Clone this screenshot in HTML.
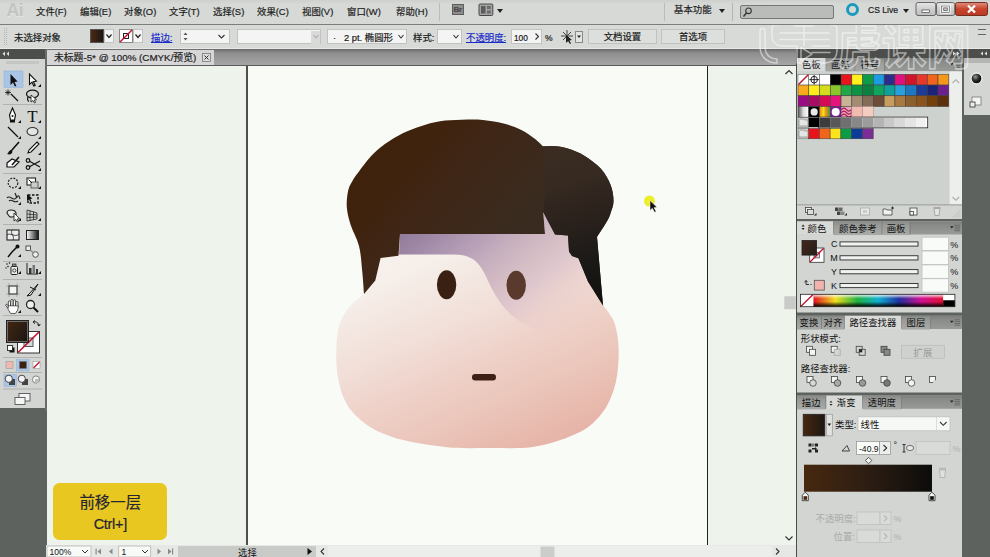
<!DOCTYPE html>
<html lang="zh">
<head>
<meta charset="utf-8">
<title>Illustrator</title>
<style>
*{box-sizing:border-box;margin:0;padding:0}
html,body{width:990px;height:557px;overflow:hidden;background:#5e625e}
body{position:relative;-webkit-text-stroke:0.2px currentColor;font-family:"Liberation Sans","Noto Sans CJK SC",sans-serif;font-size:10.5px;color:#1a1a1a;line-height:1}
.abs{position:absolute}
#menubar{left:0;top:0;width:990px;height:25px;background:linear-gradient(#cdd0cd,#d6d9d6 18%,#d6d9d6);border-bottom:1px solid #7c7e7c;z-index:2}
#menubar .mi{position:absolute;top:6.800px;font-size:9.4px;color:#222;white-space:nowrap;letter-spacing:0px}
#ctrlbar{left:0;top:24px;width:990px;height:25px;background:#d7dad7;border-bottom:1.5px solid #e8e8e8}
#ctrlbar .t{position:absolute;top:9px;font-size:9.4px;white-space:nowrap}
.box{position:absolute;background:#f4f4f4;border:1px solid #c2c2c2}
.blue{color:#1a2cc8;text-decoration:underline}
.btn{position:absolute;background:#dcdfdc;border:1px solid #bfc2bf;text-align:center;font-size:9.4px;line-height:14.5px}
#tabrow{left:46px;top:49px;width:751px;height:16px;background:linear-gradient(#6a6a6a,#8e8e8e 25%,#a6a6a6)}
#doctab{left:47px;top:50px;width:167px;height:15.5px;background:#d6d6d6;font-size:9.8px;line-height:16px;padding-left:7px;white-space:nowrap;color:#222}
#toolbar{left:0;top:49px;width:45px;height:359px;background:#d2d5d2}
#toolhead{left:0;top:49px;width:45px;height:9.5px;background:#4c4e4c}
#canvas{left:47px;top:65px;width:735px;height:480px;background:#eef3ec;overflow:hidden;border-top:1px solid #5a5a5a}
#artboard{left:199px;top:-2px;width:462px;height:484px;background:#f8fbf6;border-left:2px solid #4e4e4e;border-right:1px solid #222}
#vscroll{left:782px;top:65px;width:14px;height:480px;background:#eef0ee}
#status{left:46px;top:545px;width:750px;height:12px;background:#e2e4e2}
#rpanel{left:797px;top:57px;width:165px;height:500px;background:#5e625e}
.panel{position:absolute;left:0;width:165px;background:#d3d5d3}
.ptabs{position:absolute;left:0;top:0;width:165px;height:13px;background:#a9aba9}
.ptab{position:absolute;top:0;height:13px;font-size:9.4px;line-height:13px;text-align:center;white-space:nowrap;color:#111;background:#b8bab8;border-right:1px solid #8a8c8a}
.ptab.act{background:#d3d5d3;border-right:none}
.lbl{position:absolute;font-size:9.4px;white-space:nowrap}
.dis{color:#a9aba9}
</style>
</head>
<body>
<!-- MENUBAR -->
<div id="menubar" class="abs">
  <div class="abs" style="left:6.500px;top:0px;font-size:17.500px;font-weight:bold;color:#c2c5c2;letter-spacing:-0.500px;line-height:21px;-webkit-text-stroke:0;text-shadow:0 1px 0 #e4e6e4">Ai</div>
  <div class="mi" style="left:36px">文件(F)</div>
  <div class="mi" style="left:80px">编辑(E)</div>
  <div class="mi" style="left:124px">对象(O)</div>
  <div class="mi" style="left:169px">文字(T)</div>
  <div class="mi" style="left:213px">选择(S)</div>
  <div class="mi" style="left:257px">效果(C)</div>
  <div class="mi" style="left:302px">视图(V)</div>
  <div class="mi" style="left:347px">窗口(W)</div>
  <div class="mi" style="left:396px">帮助(H)</div>
  <div class="abs" style="left:439px;top:3px;width:1px;height:18px;background:#bcbcbc"></div>
  <div class="abs" style="left:451.500px;top:3.800px;width:12.500px;height:11.400px;background:#8e8e8e;border:1px solid #5c5c5c;color:#484848;font-size:8px;font-weight:bold;line-height:9.500px;text-align:center;letter-spacing:-0.300px">Br</div>
  <svg class="abs" style="left:478px;top:3px" width="16" height="14"><rect x="1" y="1" width="13.800" height="11.500" rx="1" fill="#a4a4a4" stroke="#484848" stroke-width="1"/><rect x="3" y="3" width="4.500" height="7.500" fill="#5c5c5c"/><rect x="9" y="3" width="3.800" height="3" fill="#6c6c6c"/><rect x="9" y="7.500" width="3.800" height="3" fill="#6c6c6c"/></svg>
  <div class="abs" style="left:497px;top:8.500px;border:3px solid transparent;border-top:4px solid #222"></div>
  <div class="mi" style="left:674px;top:5px">基本功能</div>
  <div class="abs" style="left:718.500px;top:9px;border:3px solid transparent;border-top:4px solid #222"></div>
  <div class="abs" style="left:731.500px;top:3px;width:1px;height:18px;background:#b4b4b4"></div>
  <div class="abs" style="left:740px;top:4.500px;width:94px;height:14px;background:#babcba;border:1px solid #767676;border-radius:2px"></div>
  <div class="abs" style="left:664px;top:3px;width:1px;height:18px;background:#bcbcbc"></div>
  <svg class="abs" style="left:742px;top:6px" width="12" height="12"><circle cx="6.500" cy="4.800" r="2.800" fill="none" stroke="#333" stroke-width="1.100"/><path d="M4.500,7 L1.500,10.500" stroke="#333" stroke-width="1.400"/></svg>
  <div class="abs" style="left:845.500px;top:3.300px;width:13px;height:13px;border:3px solid #1b9bbb;border-radius:50%"></div>
  <div class="mi" style="left:868px;top:5.500px;font-size:8.600px;letter-spacing:0px">CS Live</div>
  <div class="abs" style="left:902.500px;top:8.500px;border:3px solid transparent;border-top:4px solid #222"></div>
  <svg class="abs" style="left:914px;top:0" width="76" height="18">
   <defs><linearGradient id="wb" x1="0" x2="0" y1="0" y2="1"><stop offset="0" stop-color="#e6e6e6"/><stop offset="0.5" stop-color="#cfcfcf"/><stop offset="1" stop-color="#bdbdbd"/></linearGradient>
   <linearGradient id="wc" x1="0" x2="0" y1="0" y2="1"><stop offset="0" stop-color="#e09080"/><stop offset="0.5" stop-color="#c8432c"/><stop offset="1" stop-color="#b83a24"/></linearGradient></defs>
   <rect x="2" y="2.500" width="19.700" height="13" rx="2" fill="url(#wb)" stroke="#5a5a5a" stroke-width="0.900"/>
   <rect x="22.500" y="2.500" width="18.200" height="13" rx="2" fill="url(#wb)" stroke="#5a5a5a" stroke-width="0.900"/>
   <rect x="41.500" y="2.500" width="32" height="13" rx="2" fill="url(#wc)" stroke="#6a2416" stroke-width="0.900"/>
   <rect x="8" y="10" width="7.500" height="2.500" fill="#fff" stroke="#444" stroke-width="0.700"/>
   <rect x="27.500" y="6" width="8" height="6.500" fill="none" stroke="#fff" stroke-width="2.200"/><rect x="27.500" y="6" width="8" height="6.500" fill="none" stroke="#444" stroke-width="0.600"/><rect x="29.800" y="8" width="3.400" height="2.500" fill="none" stroke="#444" stroke-width="0.600"/>
   <path d="M54,5.500 L61,12.500 M61,5.500 L54,12.500" stroke="#fff" stroke-width="2.300"/>
  </svg>
</div>
<!-- CONTROL BAR -->
<div id="ctrlbar" class="abs">
  <div class="abs" style="left:4px;top:4px;width:3px;height:17px;border-left:1px dotted #b4b4b4;border-right:1px dotted #b4b4b4"></div>
  <div class="t" style="left:14px">未选择对象</div>
  <div class="abs" style="left:90px;top:5px;width:14px;height:14px;background:linear-gradient(90deg,#4a2a14,#1c1611);border:1px solid #555"></div>
  <div class="box" style="left:104px;top:5px;width:10px;height:14px"></div>
  <svg class="abs" style="left:104px;top:5px" width="10" height="14"><path d="M2.500,5.500 L5,8.500 L7.500,5.500" fill="none" stroke="#222" stroke-width="1.200"/></svg>
  <div class="abs" style="left:119px;top:5px;width:14px;height:14px;background:#fff;border:1px solid #888"></div>
  <svg class="abs" style="left:119px;top:5px" width="14" height="14"><rect x="4.500" y="4.500" width="5" height="5" fill="#fff" stroke="#222" stroke-width="1"/><path d="M1,13 L13,1" stroke="#c0102c" stroke-width="1.500"/></svg>
  <div class="box" style="left:133px;top:5px;width:10px;height:14px"></div>
  <svg class="abs" style="left:133px;top:5px" width="10" height="14"><path d="M2.500,5.500 L5,8.500 L7.500,5.500" fill="none" stroke="#222" stroke-width="1.200"/></svg>
  <div class="t blue" style="left:151px">描边:</div>
  <div class="box" style="left:180px;top:5px;width:50px;height:15px"></div>
  <svg class="abs" style="left:180px;top:5px" width="50" height="15"><path d="M3.500,6 L5.500,3.500 L7.500,6 Z M3.500,9 L5.500,11.500 L7.500,9 Z" fill="#555"/><path d="M38.500,6 L41.500,9 L44.500,6" fill="none" stroke="#333" stroke-width="1.100"/></svg>
  <div class="box" style="left:237px;top:5px;width:84px;height:15px"></div>
  <div class="abs" style="left:311px;top:7px;width:9px;height:13px;background:#dadada"></div>
  <svg class="abs" style="left:311px;top:5px" width="10" height="15"><path d="M2.500,6 L5,9 L7.500,6" fill="none" stroke="#aaa" stroke-width="1.100"/></svg>
  <div class="box" style="left:327px;top:5px;width:80px;height:15px"></div>
  <div class="t" style="left:333px;top:8.500px">·&nbsp;&nbsp;&nbsp;2 pt. 椭圆形</div>
  <svg class="abs" style="left:396px;top:5px" width="10" height="15"><path d="M2.500,6 L5,9 L7.500,6" fill="none" stroke="#333" stroke-width="1.100"/></svg>
  <div class="t" style="left:413px">样式:</div>
  <div class="box" style="left:437px;top:5px;width:25px;height:15px"></div>
  <svg class="abs" style="left:451px;top:5px" width="10" height="15"><path d="M2.500,6 L5,9 L7.500,6" fill="none" stroke="#333" stroke-width="1.100"/></svg>
  <div class="t blue" style="left:466px">不透明度:</div>
  <div class="box" style="left:511px;top:5px;width:31px;height:15px"></div>
  <div class="t" style="left:514px;top:9.500px;font-size:8.300px">100</div>
  <svg class="abs" style="left:532px;top:5px" width="10" height="15"><path d="M3.500,4.500 L6.500,7.500 L3.500,10.500" fill="none" stroke="#333" stroke-width="1.100"/></svg>
  <div class="t" style="left:545px;top:9.500px;font-size:8.500px">%</div>
  <svg class="abs" style="left:560px;top:4px" width="24" height="18"><g stroke="#444" stroke-width="1" fill="none"><path d="M3,4 L11,12 M7,2 L7,14 M1,8 L13,8 M11,4 L3,12"/></g><path d="M6,7 L6,15 L8,13 L10,16 L11,15.500 L9.500,12.500 L12,12 Z" fill="#222"/><rect x="15.500" y="3.500" width="7" height="11" fill="#e4e4e4" stroke="#888"/><path d="M17,7.500 L19,10 L21,7.500 Z" fill="#222"/></svg>
  <div class="btn" style="left:588px;top:5px;width:69px;height:15px">文档设置</div>
  <div class="btn" style="left:661px;top:5px;width:64px;height:15px">首选项</div>
  <div class="abs" style="left:978px;top:5px;width:8px;height:6px;border-top:1px solid #666;border-bottom:1px solid #666"></div>
</div>
<!-- TAB ROW -->
<div id="tabrow" class="abs"></div>
<div id="doctab" class="abs">未标题-5* @ 100% (CMYK/预览)</div>
<svg class="abs" style="left:201px;top:52px" width="11" height="11"><rect x="1.500" y="1.500" width="8" height="8" fill="#dcdcdc" stroke="#777" stroke-width="0.800"/><path d="M3.500,3.500 L7.500,7.500 M7.500,3.500 L3.500,7.500" stroke="#333" stroke-width="1"/></svg>
<!-- TOOLBAR -->
<div id="toolbar" class="abs"></div>
<div id="toolhead" class="abs"></div>
<svg class="abs" style="left:0;top:49px" width="47" height="362" viewBox="0 49 47 362">
<rect x="45" y="49" width="2" height="362" fill="#6a6c6a"/>
<path d="M5,51.500 L2.500,53.700 L5,56 Z M9,51.500 L6.500,53.700 L9,56 Z" fill="#ddd"/>
<rect x="6" y="61" width="33" height="3" fill="#c4c6c4"/>
<rect x="4" y="71" width="19" height="16.500" fill="#a9c4e4" stroke="#8fb0d8" stroke-width="0.500"/>
<g fill="#111">
<!-- selection arrow -->
<path d="M10.500,74 L10.500,85 L13,82.600 L14.900,86.600 L16.400,85.900 L14.500,82 L17.600,81.600 Z"/>
<!-- direct select -->
<path d="M29.500,74 L29.500,84.500 L32,82.200 L33.800,86 L35.200,85.400 L33.400,81.600 L36.400,81.200 Z" fill="#fff" stroke="#111" stroke-width="1.100"/>
<path d="M41,84 L41,87 L38,87 Z"/>
</g>
<!-- magic wand -->
<g stroke="#111" stroke-width="1.300" fill="none"><path d="M11,94 L18,101"/><path d="M8,89.500 L8,95.500 M5,92.500 L11,92.500 M6,90.500 L10,94.500 M10,90.500 L6,94.500" stroke-width="0.800"/></g>
<!-- lasso -->
<g stroke="#111" stroke-width="1.200" fill="none"><ellipse cx="32.500" cy="94" rx="6" ry="3.800"/><path d="M28,97 C27,99 28,101 29,101.500"/></g>
<path d="M31,95 L31,102 L33,100.500 L34.500,103 L35.600,102.400 L34.300,100 L36.500,99.600 Z" fill="#fff" stroke="#111" stroke-width="0.800"/>
<rect x="3" y="104" width="39" height="1" fill="#b0b2b0"/>
<!-- pen -->
<path d="M12.500,108 L9.500,115 L10.500,120 L14.500,120 L15.500,115 Z" fill="#fff" stroke="#111" stroke-width="1.200"/><rect x="10" y="120" width="5" height="2.500" fill="#111"/><circle cx="12.500" cy="116" r="1" fill="#111"/>
<path d="M21,120 L21,123 L18,123 Z" fill="#111"/>
<!-- T -->
<text x="32.500" y="122" font-family="Liberation Serif,serif" font-size="17" text-anchor="middle" fill="#111">T</text>
<path d="M41,120 L41,123 L38,123 Z" fill="#111"/>
<!-- line -->
<path d="M8,127 L18,137" stroke="#111" stroke-width="1.300"/><path d="M21,136 L21,139 L18,139 Z" fill="#111"/>
<!-- ellipse -->
<ellipse cx="32.500" cy="131.500" rx="5.500" ry="4" fill="#e4e4e4" stroke="#333" stroke-width="1.100"/><path d="M41,136 L41,139 L38,139 Z" fill="#111"/>
<!-- brush -->
<path d="M19,142 L12,150 L10,152" stroke="#111" stroke-width="1.600" fill="none"/><path d="M11,150 C8,151 9,153 7,154 C10,155 12,154 12.500,151.500 Z" fill="#111"/>
<!-- pencil -->
<path d="M37,142 L39,144 L31,152 L28,153 L29,150 Z" fill="#fff" stroke="#111" stroke-width="1.100"/><path d="M41,152 L41,155 L38,155 Z" fill="#111"/>
<!-- blob/eraser -->
<path d="M7,163 L12,159 L19,162 L14,167 L7,167 Z" fill="#fff" stroke="#111" stroke-width="1.200"/><path d="M19,157 L12,165" stroke="#111" stroke-width="1.500"/>
<!-- scissors -->
<g stroke="#111" stroke-width="1.200" fill="none"><path d="M29,161 L40,167 M29,167 L40,161"/><circle cx="28" cy="160.500" r="1.800"/><circle cx="28" cy="167.500" r="1.800"/></g><path d="M41,168 L41,171 L38,171 Z" fill="#111"/>
<rect x="3" y="173" width="39" height="1" fill="#b0b2b0"/>
<!-- rotate -->
<circle cx="13" cy="183" r="4.800" fill="none" stroke="#222" stroke-width="1.200" stroke-dasharray="2 1.200"/><path d="M21,186 L21,189 L18,189 Z" fill="#111"/>
<!-- scale -->
<rect x="27" y="178" width="8.500" height="7" fill="#fff" stroke="#222" stroke-width="1.100"/><rect x="31" y="182" width="7" height="6" fill="#ccc" stroke="#555" stroke-width="0.900"/><path d="M28.500,179.500 L32,183" stroke="#111"/><path d="M41,186 L41,189 L38,189 Z" fill="#111"/>
<!-- warp -->
<path d="M7,198 C10,194 13,202 16,198 S19,196 20,199 M9,201 C12,198 14,204 18,201" stroke="#222" stroke-width="1.200" fill="none"/><path d="M15,193 L17,198" stroke="#222" stroke-width="1.200"/><path d="M21,202 L21,205 L18,205 Z" fill="#111"/>
<!-- free transform -->
<rect x="28" y="195" width="10" height="8" fill="none" stroke="#111" stroke-width="1.400" stroke-dasharray="2.500 1.500"/><path d="M27,194 L27,201 L29,199.500 L30.500,202 L31.600,201.400 L30.300,199 L32.500,198.600 Z" fill="#111"/>
<!-- shape builder -->
<path d="M7,213 C7,209 15,209 16,213 C17,217 10,218 9,216 Z" fill="#e8e8e8" stroke="#222" stroke-width="1.100"/><path d="M14,213 L14,221 L16,219.500 L17.500,222 L18.600,221.400 L17.300,219 L19.500,218.600 Z" fill="#fff" stroke="#111" stroke-width="0.800"/><path d="M21,218 L21,221 L18,221 Z" fill="#111"/>
<!-- perspective grid -->
<path d="M27,210 L27,221 L37,219 L37,213 Z M30,210.600 L30,220.400 M33.500,211.500 L33.500,219.700 M27,214 L37,215 M27,217.500 L37,217" fill="none" stroke="#333" stroke-width="0.900"/><path d="M41,218 L41,221 L38,221 Z" fill="#111"/>
<rect x="3" y="224" width="39" height="1" fill="#b0b2b0"/>
<!-- mesh -->
<rect x="7" y="230" width="12" height="10" fill="#eee" stroke="#222" stroke-width="1.100"/><path d="M7,235 C10,232 15,238 19,234 M12,230 C10,234 15,236 13,240" fill="none" stroke="#222" stroke-width="0.800"/>
<!-- gradient -->
<defs><linearGradient id="tg" x1="0" x2="1" y1="0" y2="0"><stop offset="0" stop-color="#fff"/><stop offset="1" stop-color="#111"/></linearGradient></defs>
<rect x="26.500" y="230.500" width="12" height="9" fill="url(#tg)" stroke="#222" stroke-width="1"/>
<!-- eyedropper -->
<path d="M18,246 L12,252 L8,257" stroke="#111" stroke-width="1.500" fill="none"/><circle cx="17.500" cy="246.500" r="2" fill="#111"/><path d="M21,254 L21,257 L18,257 Z" fill="#111"/>
<!-- blend -->
<rect x="26" y="246" width="4.500" height="4.500" fill="#eee" stroke="#444" stroke-width="0.900"/><circle cx="35.500" cy="254.500" r="2.800" fill="#eee" stroke="#444" stroke-width="0.900"/><path d="M30,250 L34,253" stroke="#888" stroke-width="1.500"/>
<rect x="3" y="261" width="39" height="1" fill="#b0b2b0"/>
<!-- symbol sprayer -->
<rect x="11" y="266.500" width="6.500" height="8" rx="1" fill="#eee" stroke="#222" stroke-width="1"/><rect x="12.500" y="264" width="3.500" height="2.500" fill="#888" stroke="#222" stroke-width="0.700"/><circle cx="14.300" cy="270.500" r="1.600" fill="none" stroke="#222" stroke-width="0.800"/>
<g fill="#222"><circle cx="7" cy="264" r="0.800"/><circle cx="9.500" cy="263" r="0.800"/><circle cx="8" cy="266.500" r="0.800"/><circle cx="6" cy="268" r="0.700"/></g>
<path d="M21,271 L21,274 L18,274 Z" fill="#111"/>
<!-- graph -->
<path d="M27,263 L27,274 L38,274" fill="none" stroke="#222" stroke-width="1"/><rect x="29" y="268" width="2.500" height="6" fill="#333"/><rect x="32.500" y="265" width="2.500" height="9" fill="#777"/><rect x="36" y="269" width="2" height="5" fill="#333"/><path d="M41,271 L41,274 L38,274 Z" fill="#111"/>
<rect x="3" y="279" width="39" height="1" fill="#b0b2b0"/>
<!-- artboard -->
<rect x="9" y="286" width="8" height="8" fill="#f4f4f4" stroke="#333" stroke-width="1"/><path d="M9,283.500 L9,296.500 M17,283.500 L17,296.500 M6.500,286 L19.500,286 M6.500,294 L19.500,294" stroke="#555" stroke-width="0.600" stroke-dasharray="1 1"/>
<!-- slice -->
<path d="M38,284 L30,293 L27,296 L31,295 Z" fill="#eee" stroke="#111" stroke-width="1"/><path d="M30,287 L36,290" stroke="#111" stroke-width="1"/><path d="M41,293 L41,296 L38,296 Z" fill="#111"/>
<!-- hand -->
<g fill="#fff" stroke="#222" stroke-width="0.800" stroke-linejoin="round">
<path d="M8.500,309 L5.800,305.500 C5.300,304.500 6.500,303.800 7.300,304.600 L9,306.500 Z"/>
<rect x="8.300" y="301" width="2.300" height="7" rx="1.100"/><rect x="10.800" y="299.500" width="2.300" height="8" rx="1.100"/><rect x="13.300" y="299.800" width="2.300" height="8" rx="1.100"/><rect x="15.800" y="301.500" width="2.200" height="7" rx="1.100"/>
<path d="M8.300,306 L18,306 L17.600,310 L15.500,313.300 L10.500,313.300 L8.300,309.500 Z"/>
</g>
<path d="M8.700,306.600 L17.600,306.600 L17.300,309.500 L15.200,312.800 L10.800,312.800 L8.700,309.300 Z" fill="#fff"/>
<path d="M21,310 L21,313 L18,313 Z" fill="#111"/>
<!-- zoom -->
<circle cx="30.500" cy="304.500" r="4" fill="#f0f0f0" stroke="#222" stroke-width="1.300"/><path d="M33.500,307.500 L38,312" stroke="#111" stroke-width="2"/>
<rect x="3" y="315" width="39" height="1" fill="#b0b2b0"/>
<!-- fill/stroke -->
<rect x="17.500" y="331.500" width="22" height="21.500" fill="#fff" stroke="#333" stroke-width="1"/>
<rect x="24" y="338" width="9" height="8.500" fill="#d8d8d8" stroke="#555" stroke-width="1"/>
<path d="M18,352.500 L39,332" stroke="#c0102c" stroke-width="1.600"/>
<defs><linearGradient id="tf" x1="0" x2="1" y1="0" y2="0.600"><stop offset="0" stop-color="#452712"/><stop offset="1" stop-color="#1e1813"/></linearGradient></defs>
<rect x="6.500" y="320.500" width="22" height="22" fill="url(#tf)" stroke="#222" stroke-width="1"/>
<rect x="7.500" y="321.500" width="20" height="20" fill="none" stroke="#8a8a8a" stroke-width="0.700"/>
<path d="M33,322 C36,321 39,323 39,326 M39,326 L37.300,324.500 M39,326 L40.300,324" stroke="#222" stroke-width="1" fill="none"/><path d="M33,322 L35,320.500 M33,322 L35,323.700" stroke="#222" stroke-width="1" fill="none"/>
<rect x="9.500" y="347.500" width="5" height="5" fill="#111"/><rect x="7.500" y="345.500" width="5" height="5" fill="#fff" stroke="#111" stroke-width="0.800"/>
<rect x="3" y="357" width="39" height="1" fill="#b0b2b0"/>
<!-- color/gradient/none -->
<rect x="6" y="361.500" width="7" height="7" fill="#efb8b0" stroke="#999" stroke-width="0.600"/>
<rect x="16.500" y="359.500" width="12.500" height="11.500" fill="#a9c4e4" stroke="#8fb0d8" stroke-width="0.500"/>
<rect x="19.500" y="361.500" width="7" height="7" fill="#3a2112" stroke="#777" stroke-width="0.600"/>
<rect x="33" y="361.500" width="7" height="7" fill="#fff" stroke="#999" stroke-width="0.600"/><path d="M33.500,368 L39.500,362" stroke="#c0102c" stroke-width="1.300"/>
<rect x="3" y="372" width="39" height="1" fill="#b0b2b0"/>
<!-- draw modes -->
<rect x="4" y="374.500" width="12.500" height="12" fill="#a9c4e4" stroke="#8fb0d8" stroke-width="0.500"/>
<rect x="9" y="379" width="6" height="6" fill="#444"/><circle cx="8.800" cy="378.800" r="3.600" fill="#f4f4f4" stroke="#333" stroke-width="0.900"/>
<rect x="22" y="379" width="6" height="6" fill="#444"/><circle cx="21.800" cy="378.800" r="3.600" fill="#f4f4f4" stroke="#333" stroke-width="0.900"/>
<circle cx="36" cy="379.500" r="3.600" fill="#f4f4f4" stroke="#777" stroke-width="0.900"/><rect x="35" y="379" width="4" height="4" fill="#bbb"/>
<rect x="3" y="388.500" width="39" height="1" fill="#b0b2b0"/>
<!-- screen mode -->
<rect x="19" y="393.500" width="11" height="7.500" fill="#f4f4f4" stroke="#555" stroke-width="0.900"/><rect x="15" y="397.500" width="10" height="7" fill="#f4f4f4" stroke="#555" stroke-width="0.900"/>
</svg>
<!-- CANVAS -->
<div id="canvas" class="abs">
  <div id="artboard" class="abs"></div>
</div>
<svg class="abs" style="left:0;top:0" width="990" height="557" viewBox="0 0 990 557">
<defs>
<linearGradient id="gHair" gradientUnits="userSpaceOnUse" x1="370" y1="130" x2="600" y2="330">
<stop offset="0" stop-color="#40220a"/><stop offset="0.17" stop-color="#3f230d"/><stop offset="0.25" stop-color="#402514"/><stop offset="0.45" stop-color="#3c291b"/><stop offset="0.55" stop-color="#3a2b1f"/><stop offset="0.7" stop-color="#372a20"/><stop offset="1" stop-color="#2a211c"/>
</linearGradient>
<linearGradient id="gHair2" gradientUnits="userSpaceOnUse" x1="560" y1="150" x2="610" y2="305">
<stop offset="0" stop-color="#3a2c21"/><stop offset="0.2" stop-color="#362a21"/><stop offset="0.45" stop-color="#2a211c"/><stop offset="0.72" stop-color="#1a1917"/><stop offset="1" stop-color="#0f0f0d"/>
</linearGradient>
<linearGradient id="gFace" gradientUnits="userSpaceOnUse" x1="415" y1="240" x2="515" y2="465">
<stop offset="0" stop-color="#f7f1ed"/><stop offset="0.1" stop-color="#f6efea"/><stop offset="0.39" stop-color="#f1ded7"/><stop offset="0.58" stop-color="#eed0c7"/><stop offset="0.74" stop-color="#ebc6bb"/><stop offset="0.91" stop-color="#e8b9ad"/><stop offset="1" stop-color="#e6b2a6"/>
</linearGradient>
<linearGradient id="gShadow" gradientUnits="userSpaceOnUse" x1="400" y1="228" x2="522.2" y2="373.5">
<stop offset="0" stop-color="#8f7998"/><stop offset="0.128" stop-color="#9d87a5"/><stop offset="0.314" stop-color="#b7a0b7"/><stop offset="0.45" stop-color="#c9b2bf"/><stop offset="0.585" stop-color="#d6bfc5"/><stop offset="0.68" stop-color="#dcc4cc" stop-opacity="0.9"/><stop offset="0.8" stop-color="#e4c6c8" stop-opacity="0.45"/><stop offset="0.92" stop-color="#e8c8c8" stop-opacity="0.1"/><stop offset="1" stop-color="#ecc8c4" stop-opacity="0"/>
</linearGradient>
</defs>
<!-- face -->
<path d="M364.0,294.0 C361.8,295.9 354.8,300.8 351.0,305.3 C347.1,309.7 343.2,315.4 340.9,320.5 C338.6,325.6 338.0,330.7 337.2,335.8 C336.5,340.9 336.4,346.0 336.3,351.1 C336.2,356.2 336.2,361.2 336.6,366.3 C337.0,371.4 337.6,376.5 338.7,381.6 C339.9,386.7 341.0,391.8 343.3,396.9 C345.6,402.0 347.9,407.0 352.5,412.1 C357.1,417.2 362.7,422.8 370.8,427.4 C378.9,432.0 388.6,436.3 401.3,439.6 C414.0,442.9 432.2,445.9 447.0,447.3 C461.8,448.7 476.0,448.0 490.0,448.0 C504.0,448.0 519.1,448.7 531.0,447.3 C542.9,445.9 552.2,442.9 561.6,439.6 C571.0,436.3 580.7,432.0 587.6,427.4 C594.4,422.8 598.9,417.2 602.8,412.1 C606.7,407.0 608.9,402.0 611.1,396.9 C613.3,391.8 614.8,386.7 616.0,381.6 C617.1,376.5 617.6,371.4 618.1,366.3 C618.5,361.2 618.8,356.2 618.7,351.1 C618.6,346.0 618.3,340.9 617.5,335.8 C616.6,330.7 615.8,325.6 613.5,320.5 C611.2,315.5 605.2,308.0 603.5,305.5 L578.4,258.2 L572,256 L569,251.5 L568,232 L540,205 L400,232.5 L398.5,255.7 L380.6,258 L375.3,280.5 Z" fill="url(#gFace)"/>
<!-- shadow -->
<clipPath id="faceClip"><path d="M364.0,294.0 C361.8,295.9 354.8,300.8 351.0,305.3 C347.1,309.7 343.2,315.4 340.9,320.5 C338.6,325.6 338.0,330.7 337.2,335.8 C336.5,340.9 336.4,346.0 336.3,351.1 C336.2,356.2 336.2,361.2 336.6,366.3 C337.0,371.4 337.6,376.5 338.7,381.6 C339.9,386.7 341.0,391.8 343.3,396.9 C345.6,402.0 347.9,407.0 352.5,412.1 C357.1,417.2 362.7,422.8 370.8,427.4 C378.9,432.0 388.6,436.3 401.3,439.6 C414.0,442.9 432.2,445.9 447.0,447.3 C461.8,448.7 476.0,448.0 490.0,448.0 C504.0,448.0 519.1,448.7 531.0,447.3 C542.9,445.9 552.2,442.9 561.6,439.6 C571.0,436.3 580.7,432.0 587.6,427.4 C594.4,422.8 598.9,417.2 602.8,412.1 C606.7,407.0 608.9,402.0 611.1,396.9 C613.3,391.8 614.8,386.7 616.0,381.6 C617.1,376.5 617.6,371.4 618.1,366.3 C618.5,361.2 618.8,356.2 618.7,351.1 C618.6,346.0 618.3,340.9 617.5,335.8 C616.6,330.7 615.8,325.6 613.5,320.5 C611.2,315.5 605.2,308.0 603.5,305.5 L578.4,258.2 L572,256 L569,251.5 L568,232 L540,205 L400,232.5 L398.5,255.7 L380.6,258 L375.3,280.5 Z"/></clipPath>
<path clip-path="url(#faceClip)" d="M400,233.5 L545,233.5 L543.2,211.9 L555,234.5 L568,235.6 L569,251.5 L572,256 L578.4,258.2 L603,305.5 C611,314 619,328 619,350 L575,338 C525,332 506,316 492,289 C482,268 478,255 455,254.5 L399,254.5 Z" fill="url(#gShadow)"/>
<!-- hair main -->
<path d="M364.0,294.0 C363.7,290.3 363.1,280.0 362.3,272.0 C361.5,264.0 361.0,253.9 359.0,246.0 C357.0,238.1 352.5,231.0 350.5,224.5 C348.5,218.0 347.2,212.8 346.8,207.0 C346.4,201.2 347.3,194.5 348.3,190.0 C349.3,185.5 351.4,182.9 353.0,180.0 C354.6,177.1 355.1,176.7 358.0,172.8 C360.9,168.9 366.0,161.5 370.5,156.7 C375.0,151.9 379.5,148.0 384.9,144.1 C390.3,140.2 396.8,136.3 402.8,133.3 C408.8,130.3 414.6,128.2 420.8,126.2 C427.0,124.2 433.2,122.4 440.0,121.3 C446.8,120.2 454.3,120.0 461.5,119.8 C468.7,119.6 475.8,119.3 483.0,120.0 C490.2,120.7 498.1,122.0 504.6,123.7 C511.1,125.4 516.9,127.7 521.9,130.2 C526.9,132.7 531.3,136.1 534.8,138.8 C538.3,141.5 541.6,145.1 543.0,146.3 C545.1,146.3 551.4,145.8 555.6,146.2 C559.9,146.6 563.6,147.2 568.5,148.8 C573.4,150.4 579.3,152.6 584.7,155.9 C590.1,159.2 596.6,164.0 600.9,168.8 C605.2,173.7 608.5,179.6 610.6,185.0 C612.7,190.4 613.5,196.3 613.5,201.0 C613.5,205.7 611.7,209.6 610.6,213.0 C609.5,216.4 609.1,217.5 606.8,221.5 C604.5,225.5 598.6,234.4 597.0,237.0 L603,305.5 L588,281.5 L578.4,258.2 L572,256 L569,251.5 L568,235.6 L555,234.5 L543.2,211.9 L545,234 L400,234 L398.5,255.7 L380.6,258 L375.3,280.5 Z" fill="url(#gHair)"/>
<!-- hair right bump -->
<path d="M543,146.3 C545.1,146.3 551.4,145.8 555.6,146.2 C559.9,146.6 563.6,147.2 568.5,148.8 C573.4,150.4 579.3,152.6 584.7,155.9 C590.1,159.2 596.6,164.0 600.9,168.8 C605.2,173.7 608.5,179.6 610.6,185.0 C612.7,190.4 613.5,196.3 613.5,201.0 C613.5,205.7 611.7,209.6 610.6,213.0 C609.5,216.4 609.1,217.5 606.8,221.5 C604.5,225.5 598.6,234.4 597.0,237.0 L603,305.5 L588,281.5 L578.4,258.2 L572,256 L569,251.5 L568,235.6 L555,234.5 L543.2,211.9 Q547.5,180 543,146.3 Z" fill="url(#gHair2)"/>
<!-- eyes -->
<ellipse cx="446.600" cy="284.700" rx="9.700" ry="14.500" fill="#3a2013"/>
<ellipse cx="516.200" cy="285.300" rx="9.700" ry="14.500" fill="#5a3a2c"/>
<!-- mouth -->
<rect x="472" y="374" width="24" height="6.500" rx="3.200" fill="#3e2114"/>
<!-- cursor -->
<circle cx="649.500" cy="201" r="5.500" fill="#ecee2a"/>
<path d="M650,200.500 L650,210.500 L652.300,208.300 L654.600,212.300 L656.200,211.500 L654,207.700 L657,207.300 Z" fill="#111" stroke="#fff" stroke-width="0.500"/>
</svg>
<svg class="abs" style="left:780px;top:49px" width="210" height="508" viewBox="780 49 210 508" font-family="Liberation Sans, Noto Sans CJK SC, sans-serif" font-size="9.4">
<defs>
<linearGradient id="spec" x1="0" x2="1" y1="0" y2="0"><stop offset="0" stop-color="#e01020"/><stop offset="0.17" stop-color="#f0e020"/><stop offset="0.34" stop-color="#20b040"/><stop offset="0.5" stop-color="#10b0d0"/><stop offset="0.66" stop-color="#2030a0"/><stop offset="0.83" stop-color="#d01090"/><stop offset="1" stop-color="#e01030"/></linearGradient>
<linearGradient id="specv" x1="0" x2="0" y1="0" y2="1"><stop offset="0" stop-color="#fff" stop-opacity="0.9"/><stop offset="0.35" stop-color="#fff" stop-opacity="0"/><stop offset="0.6" stop-color="#000" stop-opacity="0"/><stop offset="1" stop-color="#000" stop-opacity="1"/></linearGradient>
<linearGradient id="gbar" x1="0" x2="1" y1="0" y2="0"><stop offset="0" stop-color="#47280f"/><stop offset="0.5" stop-color="#2c1d13"/><stop offset="1" stop-color="#0c0c0a"/></linearGradient>
<linearGradient id="tabbg" x1="0" x2="0" y1="0" y2="1"><stop offset="0" stop-color="#7c7e7c"/><stop offset="0.3" stop-color="#8a8c8a"/><stop offset="1" stop-color="#989a98"/></linearGradient><linearGradient id="tabin" x1="0" x2="0" y1="0" y2="1"><stop offset="0" stop-color="#8c8e8c"/><stop offset="0.3" stop-color="#9a9c9a"/><stop offset="1" stop-color="#a8aaa8"/></linearGradient>
<radialGradient id="rg1"><stop offset="0.55" stop-color="#fff"/><stop offset="0.8" stop-color="#000"/></radialGradient>
<radialGradient id="rg2"><stop offset="0.5" stop-color="#fff"/><stop offset="0.95" stop-color="#7a1c98"/></radialGradient>
<linearGradient id="rain" x1="0" x2="1" y1="0" y2="0"><stop offset="0" stop-color="#f08018"/><stop offset="0.35" stop-color="#f8e018"/><stop offset="0.6" stop-color="#f09018"/><stop offset="1" stop-color="#30a040"/></linearGradient>
<radialGradient id="ball" cx="0.4" cy="0.35"><stop offset="0" stop-color="#999"/><stop offset="0.6" stop-color="#333"/><stop offset="1" stop-color="#111"/></radialGradient>
</defs>
<rect x="780" y="65" width="16" height="480" fill="#eef3ec"/><rect x="780" y="65" width="16" height="1" fill="#5a5a5a"/>
<rect x="784.300" y="296.200" width="11.500" height="13" fill="#c9cbc9"/>
<path d="M785.500,74 L789,70.500 L792.500,74" fill="none" stroke="#333" stroke-width="1.200"/>
<path d="M785.500,536.500 L789,540 L792.500,536.500" fill="none" stroke="#333" stroke-width="1.200"/>
<rect x="796" y="49" width="1.200" height="508" fill="#4a4c4a"/>
<rect x="797" y="49" width="193" height="9.500" fill="#4c4e4c"/>
<path d="M953,51.500 L955.500,53.500 L953,55.500 Z M957,51.500 L959.500,53.500 L957,55.500 Z" fill="#ddd"/>
<path d="M983,51.500 L980.500,53.500 L983,55.500 Z M987,51.500 L984.500,53.500 L987,55.500 Z" fill="#ddd"/>
<rect x="964" y="58" width="26" height="57" fill="#d3d5d3"/>
<rect x="964" y="58" width="26" height="5" fill="#b4b6b4"/>
<circle cx="976.500" cy="78.500" r="5.500" fill="url(#ball)" stroke="#eee" stroke-width="1.300"/>
<rect x="972" y="97" width="9" height="8" fill="#f4f4f4" stroke="#777" stroke-width="0.800"/><rect x="970" y="102" width="5" height="5" fill="#eee" stroke="#333" stroke-width="0.800"/>
<rect x="797" y="58" width="165" height="161" fill="#d2d5d2"/>
<rect x="797" y="58" width="165" height="13.2" fill="url(#tabbg)"/>
<rect x="797" y="58" width="28.5" height="13.5" fill="#d8dad8"/>
<text x="811.25" y="68.3" text-anchor="middle" fill="#111">色板</text>
<rect x="826.3" y="58.6" width="28.3" height="13.2" fill="url(#tabin)"/>
<rect x="854.6" y="58" width="0.8" height="13.2" fill="#7c7e7c"/>
<text x="840.45" y="68.3" text-anchor="middle" fill="#111">画笔</text>
<rect x="855.4" y="58.6" width="28.6" height="13.2" fill="url(#tabin)"/>
<rect x="884" y="58" width="0.8" height="13.2" fill="#7c7e7c"/>
<text x="869.7" y="68.3" text-anchor="middle" fill="#111">符号</text>
<path d="M950,63 l3.600,0 l-1.800,2.200 Z" fill="#222"/>
<g fill="#6a6c6a"><rect x="954.500" y="61.5" width="5.500" height="1"/><rect x="954.500" y="63.3" width="5.500" height="1"/><rect x="954.500" y="65.1" width="5.500" height="1"/><rect x="954.500" y="66.9" width="5.500" height="1"/></g>
<rect x="797" y="71.500" width="152.600" height="133" fill="#ced2ce"/>
<rect x="798" y="74.3" width="10.77" height="10.75" fill="#fff" stroke="#555" stroke-width="0.500"/>
<path d="M798.5,84.55 L808.27,74.8" stroke="#c0102c" stroke-width="1.400"/>
<rect x="808.77" y="74.3" width="10.77" height="10.75" fill="#fff" stroke="#555" stroke-width="0.500"/>
<circle cx="814.15" cy="79.67" r="3.300" fill="none" stroke="#111" stroke-width="0.900"/><path d="M809.27,79.67 h9.77 M814.15,74.8 v9.75" stroke="#111" stroke-width="0.900"/>
<rect x="819.54" y="74.3" width="10.77" height="10.75" fill="#ffffff" stroke="#3c3c3c" stroke-width="0.500"/>
<rect x="830.31" y="74.3" width="10.77" height="10.75" fill="#000000" stroke="#3c3c3c" stroke-width="0.500"/>
<rect x="841.08" y="74.3" width="10.77" height="10.75" fill="#e8141c" stroke="#3c3c3c" stroke-width="0.500"/>
<rect x="851.85" y="74.3" width="10.77" height="10.75" fill="#fff01e" stroke="#3c3c3c" stroke-width="0.500"/>
<rect x="862.62" y="74.3" width="10.77" height="10.75" fill="#0c9c48" stroke="#3c3c3c" stroke-width="0.500"/>
<rect x="873.39" y="74.3" width="10.77" height="10.75" fill="#1c9ce0" stroke="#3c3c3c" stroke-width="0.500"/>
<rect x="884.16" y="74.3" width="10.77" height="10.75" fill="#2c2c8c" stroke="#3c3c3c" stroke-width="0.500"/>
<rect x="894.93" y="74.3" width="10.77" height="10.75" fill="#e0107c" stroke="#3c3c3c" stroke-width="0.500"/>
<rect x="905.7" y="74.3" width="10.77" height="10.75" fill="#d0142c" stroke="#3c3c3c" stroke-width="0.500"/>
<rect x="916.47" y="74.3" width="10.77" height="10.75" fill="#e8382c" stroke="#3c3c3c" stroke-width="0.500"/>
<rect x="927.24" y="74.3" width="10.77" height="10.75" fill="#f0641c" stroke="#3c3c3c" stroke-width="0.500"/>
<rect x="938.01" y="74.3" width="10.77" height="10.75" fill="#f4981c" stroke="#3c3c3c" stroke-width="0.500"/>
<rect x="798" y="85.05" width="10.77" height="10.75" fill="#f8ac1c" stroke="#3c3c3c" stroke-width="0.500"/>
<rect x="808.77" y="85.05" width="10.77" height="10.75" fill="#fcec1c" stroke="#3c3c3c" stroke-width="0.500"/>
<rect x="819.54" y="85.05" width="10.77" height="10.75" fill="#d4dc1c" stroke="#3c3c3c" stroke-width="0.500"/>
<rect x="830.31" y="85.05" width="10.77" height="10.75" fill="#8cc42c" stroke="#3c3c3c" stroke-width="0.500"/>
<rect x="841.08" y="85.05" width="10.77" height="10.75" fill="#20a848" stroke="#3c3c3c" stroke-width="0.500"/>
<rect x="851.85" y="85.05" width="10.77" height="10.75" fill="#0c9444" stroke="#3c3c3c" stroke-width="0.500"/>
<rect x="862.62" y="85.05" width="10.77" height="10.75" fill="#0c8040" stroke="#3c3c3c" stroke-width="0.500"/>
<rect x="873.39" y="85.05" width="10.77" height="10.75" fill="#10a460" stroke="#3c3c3c" stroke-width="0.500"/>
<rect x="884.16" y="85.05" width="10.77" height="10.75" fill="#10a09c" stroke="#3c3c3c" stroke-width="0.500"/>
<rect x="894.93" y="85.05" width="10.77" height="10.75" fill="#28a0dc" stroke="#3c3c3c" stroke-width="0.500"/>
<rect x="905.7" y="85.05" width="10.77" height="10.75" fill="#1c78c0" stroke="#3c3c3c" stroke-width="0.500"/>
<rect x="916.47" y="85.05" width="10.77" height="10.75" fill="#1c3c98" stroke="#3c3c3c" stroke-width="0.500"/>
<rect x="927.24" y="85.05" width="10.77" height="10.75" fill="#1c2478" stroke="#3c3c3c" stroke-width="0.500"/>
<rect x="938.01" y="85.05" width="10.77" height="10.75" fill="#6c2090" stroke="#3c3c3c" stroke-width="0.500"/>
<rect x="798" y="95.8" width="10.77" height="10.75" fill="#980c84" stroke="#3c3c3c" stroke-width="0.500"/>
<rect x="808.77" y="95.8" width="10.77" height="10.75" fill="#a80c64" stroke="#3c3c3c" stroke-width="0.500"/>
<rect x="819.54" y="95.8" width="10.77" height="10.75" fill="#d40c58" stroke="#3c3c3c" stroke-width="0.500"/>
<rect x="830.31" y="95.8" width="10.77" height="10.75" fill="#e4147c" stroke="#3c3c3c" stroke-width="0.500"/>
<rect x="841.08" y="95.8" width="10.77" height="10.75" fill="#c8b494" stroke="#3c3c3c" stroke-width="0.500"/>
<rect x="851.85" y="95.8" width="10.77" height="10.75" fill="#a48c74" stroke="#3c3c3c" stroke-width="0.500"/>
<rect x="862.62" y="95.8" width="10.77" height="10.75" fill="#846c58" stroke="#3c3c3c" stroke-width="0.500"/>
<rect x="873.39" y="95.8" width="10.77" height="10.75" fill="#6c4c38" stroke="#3c3c3c" stroke-width="0.500"/>
<rect x="884.16" y="95.8" width="10.77" height="10.75" fill="#c89c5c" stroke="#3c3c3c" stroke-width="0.500"/>
<rect x="894.93" y="95.8" width="10.77" height="10.75" fill="#a87840" stroke="#3c3c3c" stroke-width="0.500"/>
<rect x="905.7" y="95.8" width="10.77" height="10.75" fill="#8c602c" stroke="#3c3c3c" stroke-width="0.500"/>
<rect x="916.47" y="95.8" width="10.77" height="10.75" fill="#8c541c" stroke="#3c3c3c" stroke-width="0.500"/>
<rect x="927.24" y="95.8" width="10.77" height="10.75" fill="#74400c" stroke="#3c3c3c" stroke-width="0.500"/>
<rect x="938.01" y="95.8" width="10.77" height="10.75" fill="#5c300c" stroke="#3c3c3c" stroke-width="0.500"/>
<rect x="798" y="106.55" width="10.77" height="10.75" fill="url(#tg2)" stroke="#3c3c3c" stroke-width="0.500"/><defs><linearGradient id="tg2" x1="0" x2="1" y1="0" y2="0"><stop offset="0" stop-color="#555"/><stop offset="0.5" stop-color="#ddd"/><stop offset="1" stop-color="#fff"/></linearGradient></defs>
<rect x="808.77" y="106.55" width="10.77" height="10.75" fill="#000" stroke="#3c3c3c" stroke-width="0.500"/><circle cx="814.15" cy="111.92" r="3.600" fill="#e8e8e8"/>
<rect x="819.54" y="106.55" width="10.77" height="10.75" fill="url(#rain)" stroke="#3c3c3c" stroke-width="0.500"/>
<rect x="830.31" y="106.55" width="10.77" height="10.75" fill="#7a1c98" stroke="#3c3c3c" stroke-width="0.500"/><circle cx="835.69" cy="111.92" r="4" fill="#fff"/>
<rect x="841.08" y="106.55" width="10.77" height="10.75" fill="#e6a8b8" stroke="#3c3c3c" stroke-width="0.500"/><path d="M841.48,109.55 q2.500,-3 5,0 t5,0 M841.48,112.55 q2.500,-3 5,0 t5,0 M841.48,115.55 q2.500,-3 5,0 t5,0" fill="none" stroke="#b01050" stroke-width="1.200"/>
<rect x="851.85" y="106.55" width="10.77" height="10.75" fill="#f0bcb0" stroke="#a88" stroke-width="0.500"/>
<rect x="862.62" y="106.55" width="10.77" height="10.75" fill="#f4ccc0" stroke="#a88" stroke-width="0.500"/>
<rect x="818.700" y="117.100" width="109" height="10.700" fill="#fff" stroke="#222" stroke-width="0.800"/><rect x="798" y="117.100" width="10.300" height="10.700" fill="none" stroke="#666" stroke-width="0.500"/><rect x="798" y="128.300" width="10.300" height="10.500" fill="none" stroke="#666" stroke-width="0.500"/>
<rect x="808.6" y="117.9" width="10.77" height="9.200" fill="#000000"/>
<rect x="819.37" y="117.9" width="10.77" height="9.200" fill="#3c3c3c"/>
<rect x="830.14" y="117.9" width="10.77" height="9.200" fill="#585858"/>
<rect x="840.91" y="117.9" width="10.77" height="9.200" fill="#707070"/>
<rect x="851.68" y="117.9" width="10.77" height="9.200" fill="#888888"/>
<rect x="862.45" y="117.9" width="10.77" height="9.200" fill="#9c9c9c"/>
<rect x="873.22" y="117.9" width="10.77" height="9.200" fill="#b4b4b4"/>
<rect x="883.99" y="117.9" width="10.77" height="9.200" fill="#c8c8c8"/>
<rect x="894.76" y="117.9" width="10.77" height="9.200" fill="#d8d8d8"/>
<rect x="905.53" y="117.9" width="10.77" height="9.200" fill="#e4e4e4"/>
<rect x="916.3" y="117.9" width="9.27" height="9.200" fill="#f0f0f0"/>
<path d="M799,126 l0,-5.500 l1.500,-1.500 l3,0 l1,1 l3.500,0 l0,6 Z" fill="#e4e6e4" stroke="#888" stroke-width="0.700"/>
<rect x="808.6" y="128.6" width="10.77" height="10.200" fill="#e8141c" stroke="#3c3c3c" stroke-width="0.500"/>
<rect x="819.37" y="128.6" width="10.77" height="10.200" fill="#f0641c" stroke="#3c3c3c" stroke-width="0.500"/>
<rect x="830.14" y="128.6" width="10.77" height="10.200" fill="#fce41c" stroke="#3c3c3c" stroke-width="0.500"/>
<rect x="840.91" y="128.6" width="10.77" height="10.200" fill="#0c9c48" stroke="#3c3c3c" stroke-width="0.500"/>
<rect x="851.68" y="128.6" width="10.77" height="10.200" fill="#0c3c98" stroke="#3c3c3c" stroke-width="0.500"/>
<rect x="862.45" y="128.6" width="10.77" height="10.200" fill="#7c2c98" stroke="#3c3c3c" stroke-width="0.500"/>
<path d="M799,137 l0,-5.500 l1.500,-1.500 l3,0 l1,1 l3.500,0 l0,6 Z" fill="#e4e6e4" stroke="#888" stroke-width="0.700"/>
<rect x="949.600" y="71.500" width="12.400" height="133" fill="#ecefec"/>
<path d="M952.500,83 L955.800,79.700 L959.100,83" fill="none" stroke="#aaa" stroke-width="1.100"/>
<path d="M952.500,197 L955.800,200.300 L959.100,197" fill="none" stroke="#aaa" stroke-width="1.100"/>
<rect x="797" y="204.500" width="165" height="0.800" fill="#8a8c8a"/>
<rect x="805.5" y="207.5" width="6" height="5" fill="#eee" stroke="#444" stroke-width="0.800"/><rect x="807.5" y="209.5" width="6" height="5" fill="#ddd" stroke="#444" stroke-width="0.800"/><path d="M816.5,213 l0,2.500 l-2.500,0 Z" fill="#222"/>
<rect x="835" y="207.5" width="3.500" height="3.500" fill="#444"/><rect x="839" y="207.5" width="3.500" height="3.500" fill="#666"/><rect x="837" y="211.5" width="3.500" height="3.500" fill="#444"/><rect x="841" y="211.5" width="3.500" height="3.500" fill="#888"/><path d="M847,213 l0,2.500 l-2.500,0 Z" fill="#222"/>
<rect x="860.5" y="208" width="9" height="7" fill="#e8e8e8" stroke="#aaa" stroke-width="0.800"/><rect x="863" y="210" width="4" height="3" fill="#ccc"/>
<path d="M883,215 l0,-6 l3,0 l1,1 l5,0 l0,5 Z" fill="#f0f0f0" stroke="#444" stroke-width="0.800"/><path d="M891,208 l3,0 M892.5,206.5 l0,3" stroke="#222" stroke-width="0.900"/>
<rect x="910" y="208" width="7" height="7" fill="#f4f4f4" stroke="#444" stroke-width="0.800"/><rect x="910" y="211.5" width="3.500" height="3.500" fill="#f4f4f4" stroke="#444" stroke-width="0.800"/>
<path d="M934,208.5 l1,7 l4,0 l1,-7 Z" fill="#e4e4e4" stroke="#999" stroke-width="0.800"/><rect x="933.5" y="207" width="7" height="1.400" fill="#aaa"/>
<path d="M960.500,210 L953,217.500 M960.500,213 L956,217.500 M960.500,216 L959,217.500" stroke="#b4b6b4" stroke-width="0.800"/>
<rect x="797" y="221.3" width="165" height="91.2" fill="#d2d5d2"/>
<rect x="797" y="221.3" width="165" height="13.2" fill="url(#tabbg)"/>
<rect x="797" y="221.3" width="36" height="13.5" fill="#d8dad8"/>
<text x="817" y="231.6" text-anchor="middle" fill="#111">颜色</text>
<rect x="834" y="221.9" width="47.6" height="13.2" fill="url(#tabin)"/>
<rect x="881.6" y="221.3" width="0.8" height="13.2" fill="#7c7e7c"/>
<text x="857.8" y="231.6" text-anchor="middle" fill="#111">颜色参考</text>
<rect x="882.5" y="221.9" width="27.1" height="13.2" fill="url(#tabin)"/>
<rect x="909.6" y="221.3" width="0.8" height="13.2" fill="#7c7e7c"/>
<text x="896.05" y="231.6" text-anchor="middle" fill="#111">画板</text>
<path d="M950,226.3 l3.600,0 l-1.800,2.200 Z" fill="#222"/>
<g fill="#6a6c6a"><rect x="954.500" y="224.8" width="5.500" height="1"/><rect x="954.500" y="226.6" width="5.500" height="1"/><rect x="954.500" y="228.4" width="5.500" height="1"/><rect x="954.500" y="230.2" width="5.500" height="1"/></g>
<path d="M801.500,226.500 l1.600,-2 l1.600,2 Z M801.500,228 l1.600,2 l1.600,-2 Z" fill="#222"/>
<rect x="809.700" y="248" width="14.300" height="14.300" fill="#fff" stroke="#333" stroke-width="0.800"/><rect x="814" y="252.300" width="5.600" height="5.600" fill="#d8d8d8" stroke="#555" stroke-width="0.800"/><path d="M810,262 L823.700,248.300" stroke="#c0102c" stroke-width="1.300"/>
<rect x="802" y="240.500" width="14.600" height="14.600" fill="url(#gbarS)" stroke="#222" stroke-width="0.800"/>
<defs><linearGradient id="gbarS" x1="0" x2="1" y1="0" y2="0.700"><stop offset="0" stop-color="#45281a"/><stop offset="1" stop-color="#28201b"/></linearGradient></defs>
<text x="831" y="247.3" fill="#111" font-size="9">C</text>
<rect x="840" y="241.9" width="78" height="4.200" fill="#f0f2f0" stroke="#2a2a2a" stroke-width="0.900"/>
<rect x="922" y="237.2" width="26.500" height="13.400" fill="#f9fbf9" stroke="#bfc1bf" stroke-width="0.800"/>
<text x="950.300" y="247.5" fill="#111" font-size="9">%</text>
<text x="830.3" y="261.15" fill="#111" font-size="9">M</text>
<rect x="840" y="255.75" width="78" height="4.200" fill="#f0f2f0" stroke="#2a2a2a" stroke-width="0.900"/>
<rect x="922" y="251.05" width="26.500" height="13.400" fill="#f9fbf9" stroke="#bfc1bf" stroke-width="0.800"/>
<text x="950.300" y="261.35" fill="#111" font-size="9">%</text>
<text x="831" y="275" fill="#111" font-size="9">Y</text>
<rect x="840" y="269.6" width="78" height="4.200" fill="#f0f2f0" stroke="#2a2a2a" stroke-width="0.900"/>
<rect x="922" y="264.9" width="26.500" height="13.400" fill="#f9fbf9" stroke="#bfc1bf" stroke-width="0.800"/>
<text x="950.300" y="275.2" fill="#111" font-size="9">%</text>
<text x="831" y="288.85" fill="#111" font-size="9">K</text>
<rect x="840" y="283.45" width="78" height="4.200" fill="#f0f2f0" stroke="#2a2a2a" stroke-width="0.900"/>
<rect x="922" y="278.75" width="26.500" height="13.400" fill="#f9fbf9" stroke="#bfc1bf" stroke-width="0.800"/>
<text x="950.300" y="289.05" fill="#111" font-size="9">%</text>
<path d="M806,280.500 l0,4 l3,0 M806,280.500 l-1.500,1.800 M806,280.500 l1.500,1.800" stroke="#222" stroke-width="0.900" fill="none"/><rect x="810.500" y="284" width="1" height="1" fill="#222"/>
<rect x="814.300" y="280.300" width="10" height="9.800" fill="#f0b4ac" stroke="#555" stroke-width="0.800"/>
<rect x="813.300" y="294.300" width="130" height="12.400" fill="url(#spec)"/><rect x="813.300" y="294.300" width="130" height="12.400" fill="url(#specv)"/>
<rect x="943.200" y="294.300" width="11.700" height="6" fill="#fff"/><rect x="943.200" y="300.300" width="11.700" height="6.400" fill="#000"/>
<rect x="800.500" y="294.300" width="12.800" height="12.400" fill="#fff"/><path d="M801,306.300 L812.800,294.800" stroke="#c0102c" stroke-width="1.300"/>
<rect x="800.500" y="294.300" width="154.400" height="12.400" fill="none" stroke="#222" stroke-width="0.800"/>
<rect x="797" y="315.8" width="165" height="76.7" fill="#d2d5d2"/>
<rect x="797" y="315.8" width="165" height="13.2" fill="url(#tabbg)"/>
<rect x="797" y="316.4" width="24" height="13.2" fill="url(#tabin)"/>
<rect x="821" y="315.8" width="0.8" height="13.2" fill="#7c7e7c"/>
<text x="809" y="326.1" text-anchor="middle" fill="#111">变换</text>
<rect x="822" y="316.4" width="22" height="13.2" fill="url(#tabin)"/>
<rect x="844" y="315.8" width="0.8" height="13.2" fill="#7c7e7c"/>
<text x="833" y="326.1" text-anchor="middle" fill="#111">对齐</text>
<rect x="844.8" y="315.8" width="56.2" height="13.5" fill="#d8dad8"/>
<text x="872.9" y="326.1" text-anchor="middle" fill="#111">路径查找器</text>
<rect x="902" y="316.4" width="28" height="13.2" fill="url(#tabin)"/>
<rect x="930" y="315.8" width="0.8" height="13.2" fill="#7c7e7c"/>
<text x="916" y="326.1" text-anchor="middle" fill="#111">图层</text>
<path d="M950,320.8 l3.600,0 l-1.800,2.200 Z" fill="#222"/>
<g fill="#6a6c6a"><rect x="954.500" y="319.3" width="5.500" height="1"/><rect x="954.500" y="321.1" width="5.500" height="1"/><rect x="954.500" y="322.9" width="5.500" height="1"/><rect x="954.500" y="324.7" width="5.500" height="1"/></g>
<text x="800.800" y="341.800" fill="#111">形状模式:</text>
<text x="800.800" y="372.300" fill="#111">路径查找器:</text>
<rect x="901.500" y="345.300" width="43" height="13" fill="#cfd1cf" stroke="#bcbebc" stroke-width="0.800"/>
<text x="923" y="355.500" text-anchor="middle" fill="#9a9c9a">扩展</text>
<rect x="806.5" y="346.3" width="6" height="6" fill="#f4f4f4" stroke="#444" stroke-width="0.800"/>
<rect x="809.5" y="349.3" width="6" height="6" fill="#f4f4f4" stroke="#444" stroke-width="0.800"/>
<rect x="831.2" y="346.3" width="6" height="6" fill="#f4f4f4" stroke="#444" stroke-width="0.800"/>
<rect x="834.2" y="349.3" width="6" height="6" fill="#d3d5d3" stroke="#aaa" stroke-width="0.800"/>
<rect x="856.2" y="346.3" width="6" height="6" fill="#d3d5d3" stroke="#444" stroke-width="0.800"/>
<rect x="859.2" y="349.3" width="6" height="6" fill="#d3d5d3" stroke="#444" stroke-width="0.800"/>
<rect x="859.2" y="349.3" width="3" height="3" fill="#222"/>
<rect x="881" y="346.3" width="6" height="6" fill="#888" stroke="#444" stroke-width="0.800"/>
<rect x="884" y="349.3" width="6" height="6" fill="#888" stroke="#444" stroke-width="0.800"/>
<rect x="807" y="376.5" width="6" height="6" fill="#f4f4f4" stroke="#444" stroke-width="0.800"/>
<circle cx="813" cy="383" r="3.300" fill="#d8d8d8" stroke="#444" stroke-width="0.800"/>
<rect x="831.5" y="376.5" width="6" height="6" fill="#f4f4f4" stroke="#444" stroke-width="0.800"/>
<circle cx="837.5" cy="383" r="3.300" fill="#aaa" stroke="#444" stroke-width="0.800"/>
<rect x="856.5" y="376.5" width="6" height="6" fill="#f4f4f4" stroke="#444" stroke-width="0.800"/>
<circle cx="862.5" cy="383" r="3.300" fill="#999" stroke="#444" stroke-width="0.800"/>
<rect x="881" y="376.5" width="6" height="6" fill="#f4f4f4" stroke="#444" stroke-width="0.800"/>
<circle cx="887" cy="383" r="3.300" fill="#777" stroke="#444" stroke-width="0.800"/>
<rect x="905.5" y="376.5" width="6" height="6" fill="#f4f4f4" stroke="#444" stroke-width="0.800"/>
<circle cx="911.5" cy="383" r="3.300" fill="#f4f4f4" stroke="#444" stroke-width="0.800"/>
<rect x="929.5" y="376.5" width="6" height="6" fill="#f4f4f4" stroke="#444" stroke-width="0.800"/>
<rect x="933.2" y="380.3" width="5" height="5" fill="#d3d5d3"/>
<rect x="797" y="395.6" width="165" height="161.4" fill="#d2d5d2"/>
<rect x="797" y="395.6" width="165" height="13.2" fill="url(#tabbg)"/>
<rect x="797" y="396.2" width="28.5" height="13.2" fill="url(#tabin)"/>
<rect x="825.5" y="395.6" width="0.8" height="13.2" fill="#7c7e7c"/>
<text x="811.25" y="405.9" text-anchor="middle" fill="#111">描边</text>
<rect x="826.3" y="395.6" width="35.7" height="13.5" fill="#d8dad8"/>
<text x="846.15" y="405.9" text-anchor="middle" fill="#111">渐变</text>
<rect x="862.8" y="396.2" width="38.2" height="13.2" fill="url(#tabin)"/>
<rect x="901" y="395.6" width="0.8" height="13.2" fill="#7c7e7c"/>
<text x="881.9" y="405.9" text-anchor="middle" fill="#111">透明度</text>
<path d="M950,400.6 l3.600,0 l-1.800,2.200 Z" fill="#222"/>
<g fill="#6a6c6a"><rect x="954.500" y="399.1" width="5.500" height="1"/><rect x="954.500" y="400.9" width="5.500" height="1"/><rect x="954.500" y="402.7" width="5.500" height="1"/><rect x="954.500" y="404.5" width="5.500" height="1"/></g>
<path d="M829.500,402.600 l1.500,-1.800 l1.500,1.800 Z M829.500,404 l1.500,1.800 l1.500,-1.800 Z" fill="#222"/>
<rect x="803.200" y="414.300" width="21.600" height="21.600" fill="url(#gbarS2)" stroke="#222" stroke-width="0.800"/>
<defs><linearGradient id="gbarS2" x1="0" x2="1" y1="0" y2="0"><stop offset="0" stop-color="#47280f"/><stop offset="1" stop-color="#1c1712"/></linearGradient></defs>
<rect x="826.300" y="414.300" width="6" height="21.600" fill="#e0e2e0" stroke="#999" stroke-width="0.700"/><path d="M827.500,423.500 l3.600,0 l-1.800,2.400 Z" fill="#111"/>
<text x="835" y="427.800" fill="#111">类型:</text>
<rect x="858" y="416.800" width="92" height="14" fill="#f6f8f6" stroke="#bfc1bf" stroke-width="0.800"/>
<rect x="936" y="417.200" width="0.700" height="13.200" fill="#cfd1cf"/>
<text x="860.500" y="427.800" fill="#111">线性</text>
<path d="M940,422 L943.300,425.300 L946.600,422" fill="none" stroke="#333" stroke-width="1.100"/>
<g fill="#222"><rect x="808.500" y="443.500" width="3" height="3"/><rect x="812" y="443.500" width="2.500" height="3" fill="#777"/><rect x="815" y="443.500" width="3" height="3"/><rect x="808.500" y="449.500" width="3" height="3"/><rect x="815" y="449.500" width="3" height="3" /><path d="M812,448 l3,0 l0,-1 l2,1.700 l-2,1.700 l0,-1 l-3,0 Z"/></g>
<path d="M842,451 L849.500,451 L847,445.500 Z" fill="none" stroke="#333" stroke-width="0.900"/>
<rect x="856.600" y="441.500" width="23" height="13" fill="#f9fbf9" stroke="#9a9c9a" stroke-width="0.800"/>
<text x="859" y="451.600" fill="#111" font-size="8.600">-40.9</text>
<rect x="879.600" y="441.500" width="11" height="13" fill="#eceeec" stroke="#9a9c9a" stroke-width="0.800"/><path d="M883.500,445 L886.700,448 L883.500,451" fill="none" stroke="#333" stroke-width="1.100"/>
<text x="893.500" y="448" fill="#111" font-size="9">°</text>
<path d="M904,444.500 l0,7.500 M902.500,444.500 l3,0 M902.500,452 l3,0" stroke="#222" stroke-width="0.900"/><ellipse cx="910" cy="448" rx="3.600" ry="2.600" fill="#e8e8e8" stroke="#555" stroke-width="0.800"/>
<rect x="916" y="441.500" width="34" height="13" fill="#d9dbd9" stroke="#bfc1bf" stroke-width="0.800"/>
<text x="952.500" y="451.500" fill="#b0b2b0" font-size="9">%</text>
<path d="M868.600,457.300 L871.800,460.500 L868.600,463.700 L865.400,460.500 Z" fill="#f4f4f4" stroke="#333" stroke-width="0.800"/>
<rect x="804" y="464.700" width="128" height="27" fill="url(#gbar)"/>
<path d="M939.500,470 l0.800,7.500 l4.400,0 l0.800,-7.500 Z" fill="#e0e2e0" stroke="#a8aaa8" stroke-width="0.800"/><rect x="939" y="467.800" width="7" height="1.500" fill="#b4b6b4"/>
<path d="M805.3,492.2 l-3,3 l0,5.500 l6,0 l0,-5.500 Z" fill="#f4f4f4" stroke="#222" stroke-width="0.800"/><rect x="803.5" y="496.2" width="3.600" height="3.600" fill="#47280f"/>
<path d="M932,492.2 l-3,3 l0,5.500 l6,0 l0,-5.500 Z" fill="#f4f4f4" stroke="#222" stroke-width="0.800"/><rect x="930.2" y="496.2" width="3.600" height="3.600" fill="#0c0c0a"/>
<text x="815.500" y="521.800" class="dis" fill="#a9aba9">不透明度:</text>
<rect x="857" y="512" width="23" height="12.600" fill="#d9dbd9" stroke="#bfc1bf" stroke-width="0.800"/><rect x="880" y="512" width="11" height="12.600" fill="#d9dbd9" stroke="#bfc1bf" stroke-width="0.800"/><path d="M884,515.500 L887,518.300 L884,521.100" fill="none" stroke="#b4b6b4" stroke-width="1.100"/>
<text x="893.500" y="522" fill="#b0b2b0" font-size="9">%</text>
<text x="833.500" y="539.800" fill="#a9aba9">位置:</text>
<rect x="857" y="530" width="23" height="12.600" fill="#d9dbd9" stroke="#bfc1bf" stroke-width="0.800"/><rect x="880" y="530" width="11" height="12.600" fill="#d9dbd9" stroke="#bfc1bf" stroke-width="0.800"/><path d="M884,533.500 L887,536.300 L884,539.100" fill="none" stroke="#b4b6b4" stroke-width="1.100"/>
<text x="893.500" y="540" fill="#b0b2b0" font-size="9">%</text>
</svg>
<!-- STATUS BAR -->
<div id="status" class="abs"></div>
<svg class="abs" style="left:46px;top:545px" width="750" height="12" viewBox="46 545 750 12" font-family="Liberation Sans, Noto Sans CJK SC, sans-serif" font-size="9">
<rect x="46" y="545" width="750" height="12" fill="#e6e8e6"/>
<rect x="47" y="546" width="44" height="11" fill="#f8faf8" stroke="#b4b6b4" stroke-width="0.800"/>
<text x="49.500" y="555" font-size="8.500" fill="#111">100%</text>
<path d="M82,550 L85,553 L88,550" fill="none" stroke="#333" stroke-width="1"/>
<g fill="#8a8c8a"><rect x="95.500" y="548.500" width="1.200" height="6"/><path d="M101,548.500 l0,6 l-3.500,-3 Z"/><path d="M112.500,548.500 l0,6 l-3.500,-3 Z"/><path d="M157.500,548.500 l0,6 l3.500,-3 Z"/><path d="M168,548.500 l0,6 l3.500,-3 Z"/><rect x="172" y="548.500" width="1.200" height="6"/></g>
<rect x="118.700" y="546" width="32" height="11" fill="#f8faf8" stroke="#b4b6b4" stroke-width="0.800"/>
<text x="121.500" y="555" font-size="8.500" fill="#111">1</text>
<path d="M142,550 L145,553 L148,550" fill="none" stroke="#333" stroke-width="1"/>
<rect x="178" y="546" width="138" height="11" fill="#c9cbc9"/>
<text x="247.500" y="555.500" text-anchor="middle" font-size="9.400" fill="#111">选择</text>
<path d="M307.500,548 l0,7 l4.500,-3.500 Z" fill="#111"/>
<path d="M324,548.500 L321,551.500 L324,554.500" fill="none" stroke="#333" stroke-width="1.100"/>
<rect x="328" y="546" width="444" height="11" fill="#eceeec"/>
<rect x="540.500" y="546.500" width="14" height="10.500" fill="#cbcdcb"/>
<path d="M776,548.500 L779,551.500 L776,554.500" fill="none" stroke="#333" stroke-width="1.100"/>
</svg>
<!-- TOOLTIP -->
<div class="abs" style="left:53.200px;top:482.800px;width:114px;height:57.200px;background:#e8c820;border-radius:6.500px"></div>
<div class="abs" style="left:53.500px;top:494px;width:113.500px;text-align:center;font-size:15.400px;color:#262433;line-height:17px">前移一层</div>
<div class="abs" style="left:53.500px;top:516px;width:113.500px;text-align:center;font-size:14.500px;color:#262433;line-height:17px;letter-spacing:-0.300px">Ctrl+]</div>
<!-- WATERMARK -->
<svg class="abs" style="left:750px;top:10px" width="240" height="62" viewBox="750 10 240 62" overflow="visible" font-family="Noto Sans CJK SC, sans-serif">
<g fill="none" stroke="#ffffff" stroke-opacity="0.500" stroke-width="1.500" stroke-linejoin="round" stroke-linecap="round">
<path d="M760,31 C760,27.500 765,27.500 765,31 L765,46 C765,54 769,58.500 777,59 L777,63 C767,63 760,57 760,46 Z"/>
<path d="M772,33 L772,28 C772,25 775,24 778,25 L788,21 L796,26 L812,26 L820,21 L831,25 C835,24 837,26 837,29 L837,50 C837,58 832,63 824,63 L797,63 L797,46 L783,46 C776,46 772,42 772,36 Z"/>
<path d="M780,33 L829,33 M780,39.500 L829,39.500 M804,27 L804,46 M812,46 L830,46 M812,52.500 L830,52.500"/>
<path d="M801,47.500 L801,61 L812,54.200 Z"/>
<text x="837" y="63.500" font-size="48" font-weight="bold" textLength="134" lengthAdjust="spacingAndGlyphs">虎课网</text>
</g>
</svg>
</body>
</html>
